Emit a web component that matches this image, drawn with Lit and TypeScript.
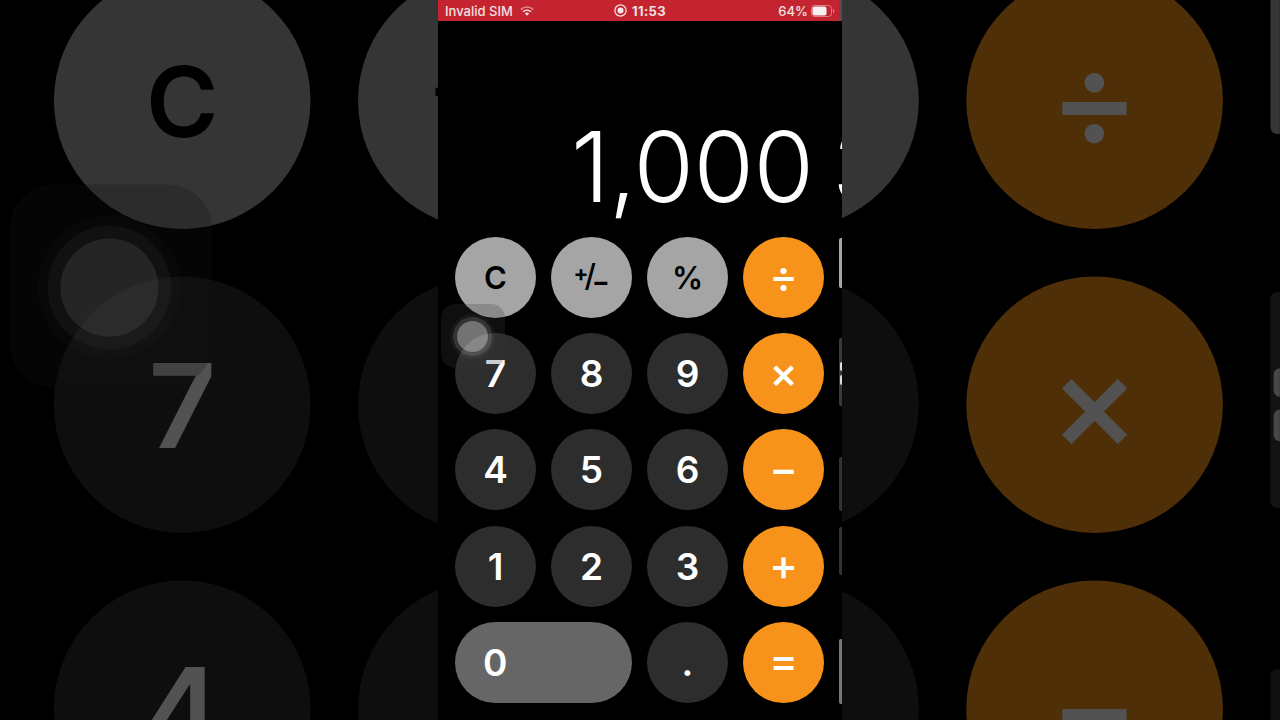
import { css, html, LitElement } from 'lit';
import { customElement } from 'lit/decorators.js';

const KEYS = [
  { label: 'C', kind: 'fn' },
  { label: 'sign', kind: 'fn' },
  { label: '%', kind: 'fn' },
  { label: '÷', kind: 'op' },
  { label: '7', kind: 'num' },
  { label: '8', kind: 'num' },
  { label: '9', kind: 'num' },
  { label: '×', kind: 'op' },
  { label: '4', kind: 'num' },
  { label: '5', kind: 'num' },
  { label: '6', kind: 'num' },
  { label: '−', kind: 'op' },
  { label: '1', kind: 'num' },
  { label: '2', kind: 'num' },
  { label: '3', kind: 'num' },
  { label: '+', kind: 'op' },
  { label: '0', kind: 'zero' },
  { label: '.', kind: 'num' },
  { label: '=', kind: 'op' },
];

@customElement('calc-screen')
export class CalcScreen extends LitElement {
  static styles = css`
    :host {
      display: block;
      position: relative;
      width: 404px;
      height: 720px;
      background: #000;
      overflow: hidden;
      font-family: Inter, "Liberation Sans", sans-serif;
    }

    .status {
      display: grid;
      grid-template-columns: 1fr auto 1fr;
      align-items: center;
      height: 21px;
      padding: 0 7px;
      background: #c4242f;
      color: #f1e0e0;
      font-size: 13px;
      font-weight: 500;
    }
    .status-left,
    .status-mid,
    .status-right {
      display: flex;
      align-items: center;
    }
    .status-left { gap: 7px; }
    .status-mid { gap: 5px; font-weight: 700; letter-spacing: 0.3px; }
    .status-right { gap: 3px; justify-content: flex-end; }

    .display {
      height: 216px;
      padding-left: 133px;
      padding-top: 97px;
      box-sizing: border-box;
      color: #fff;
      font-size: 98px;
      font-weight: 300;
      line-height: 1;
      white-space: nowrap;
      letter-spacing: -0.6px;
      word-spacing: -8px;
    }

    .keys {
      display: grid;
      grid-template-columns: repeat(4, 81px);
      grid-auto-rows: 81px;
      gap: 15.2px 15px;
      padding-left: 17px;
    }
    .key {
      display: flex;
      align-items: center;
      justify-content: center;
      border-radius: 50%;
      font-size: 37px;
      font-weight: 560;
      line-height: 1;
    }
    .fn { background: #a5a5a5; color: #000; font-size: 31px; }
    .num { background: #2d2d2d; color: #fff; }
    .op {
      box-sizing: border-box;
      padding-bottom: 3px;
      background: #f7931a;
      color: #fff;
      font-size: 43px;
      font-weight: 500;
    }
    .zero {
      grid-column: span 2;
      justify-content: flex-start;
      padding-left: 28px;
      border-radius: 41px;
      background: #666;
      color: #fff;
    }
    .sign { font-size: 31px; white-space: nowrap; font-weight: 500; }
    .sign b { font-weight: 700; }
    .sign .up { font-size: 22px; vertical-align: 6px; }
    .sign .down { font-size: 26px; vertical-align: -4px; margin-left: -4px; }
    .sign .bar { margin-left: -4px; }

    .touch {
      position: absolute;
      left: 3px;
      top: 304px;
      width: 64px;
      height: 64px;
      border-radius: 14px;
      background: rgba(60, 60, 60, 0.25);
    }
    .touch i {
      position: absolute;
      left: 16px;
      top: 17px;
      width: 31px;
      height: 31px;
      border-radius: 50%;
      background: rgba(255, 255, 255, 0.42);
      box-shadow: 0 0 0 4px rgba(255, 255, 255, 0.12), 0 0 0 7px rgba(255, 255, 255, 0.04);
    }

    .edge {
      position: absolute;
      right: 0;
      top: 0;
      width: 3.5px;
      height: 720px;
      display: flex;
      flex-direction: column;
    }
    .edge span { display: block; border-radius: 2px 0 0 2px; }
    .edge .glyph {
      position: absolute;
      right: 0;
      width: 2px;
      background: #ddd;
      border-radius: 2px 0 0 2px;
    }
    .edge .g1 { top: 362px; height: 9px; }
    .edge .g2 { top: 375px; height: 10px; }
  `;

  render() {
    return html`
      <div class="status">
        <div class="status-left">
          <span>Invalid SIM</span>
          <svg width="14" height="10" viewBox="0 0 14 10" fill="none">
            <path d="M.8 3.6a9 9 0 0 1 12.400 0" stroke="#e08a90" stroke-width="1.500"/>
            <path d="M3 5.800a6 6 0 0 1 8 0" stroke="#f5e8e8" stroke-width="1.500"/>
            <path d="M7 9.800 4.900 7.600a3 3 0 0 1 4.200 0z" fill="#f5e8e8"/>
          </svg>
        </div>
        <div class="status-mid">
          <svg width="13" height="13" viewBox="0 0 13 13" fill="none">
            <circle cx="6.500" cy="6.500" r="5.600" stroke="#f5e8e8" stroke-width="1.200"/>
            <circle cx="6.500" cy="6.500" r="3" fill="#f5e8e8"/>
          </svg>
          <span>11:53</span>
        </div>
        <div class="status-right">
          <span>64%</span>
          <svg width="24" height="12" viewBox="0 0 24 12" fill="none">
            <rect x=".5" y=".5" width="20" height="11" rx="3" stroke="#de7f86"/>
            <rect x="1.500" y="1.500" width="14" height="9" rx="2" fill="#f8f0f0"/>
            <path d="M22 4v4c.9-.3 1.400-1.100 1.400-2S22.900 4.300 22 4z" fill="#de7f86"/>
          </svg>
        </div>
      </div>
      <div class="display">1,000 3</div>
      <div class="keys">
        ${KEYS.map((k) => html`
          <div class="key ${k.kind}">
            ${k.label === 'sign'
              ? html`<span class="sign"><b class="up">+</b><span class="bar">/</span><b class="down">−</b></span>`
              : k.label}
          </div>
        `)}
      </div>
      <div class="touch"><i></i></div>
      <div class="edge">
        <span style="height:21px;background:#5a4a4a"></span>
        <span style="height:217px"></span>
        <span style="height:50px;background:#a5a5a5"></span>
        <span style="height:50px"></span>
        <span style="height:68px;background:#3a3a3a"></span>
        <span style="height:51px"></span>
        <span style="height:54px;background:#333"></span>
        <span style="height:16px"></span>
        <span style="height:48px;background:#333"></span>
        <span style="height:64px"></span>
        <span style="height:65px;background:#777"></span>
        <div class="glyph g1"></div>
        <div class="glyph g2"></div>
      </div>
    `;
  }
}

@customElement('app-root')
export class AppRoot extends LitElement {
  static styles = css`
    :host {
      display: flex;
      justify-content: center;
      position: relative;
      width: 1280px;
      height: 720px;
      overflow: hidden;
      background: #000;
    }
    /* same screen blown up and dimmed behind the phone */
    .backdrop {
      position: absolute;
      left: 438px;
      top: 2px;
      transform: scale(3.168);
      transform-origin: center;
      filter: brightness(0.32);
    }
    .front { position: relative; }
  `;

  render() {
    return html`
      <calc-screen class="backdrop"></calc-screen>
      <calc-screen class="front"></calc-screen>
    `;
  }
}
